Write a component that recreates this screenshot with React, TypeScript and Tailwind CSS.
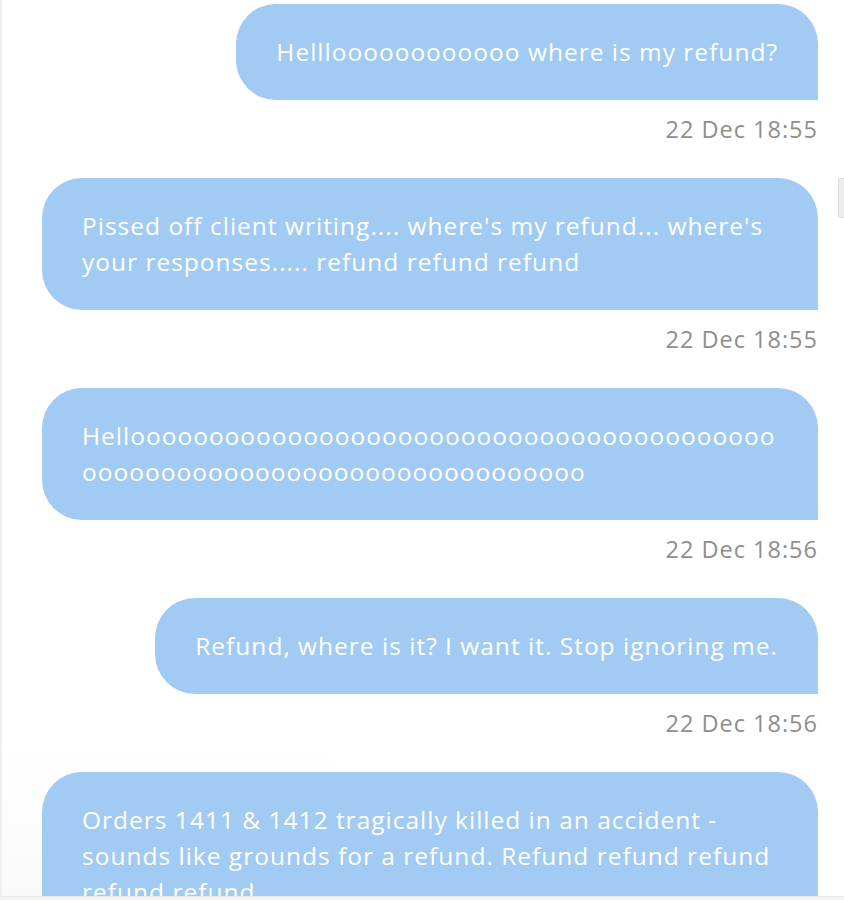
import React from 'react';

type Message = {
  id: number;
  text: string;
  time: string;
};

const messages: Message[] = [
  { id: 1, text: 'Hellloooooooooooo where is my refund?', time: '22 Dec 18:55' },
  {
    id: 2,
    text: "Pissed off client writing.... where's my refund... where's your responses..... refund refund refund",
    time: '22 Dec 18:55',
  },
  {
    id: 3,
    text: 'Hell' + 'o'.repeat(73),
    time: '22 Dec 18:56',
  },
  { id: 4, text: 'Refund, where is it? I want it. Stop ignoring me.', time: '22 Dec 18:56' },
  {
    id: 5,
    text: 'Orders 1411 & 1412 tragically killed in an accident - sounds like grounds for a refund. Refund refund refund refund refund',
    time: '22 Dec 18:57',
  },
];

const Bubble: React.FC<{ message: Message }> = ({ message }) => (
  <div className="mb-[34px] flex flex-col items-end">
    <div className="max-w-full rounded-[40px] rounded-br-none bg-[#a1cbf2] px-[40px] py-[30px] font-['Open_Sans',sans-serif] text-[24.5px] leading-[36px] tracking-[1px] text-white [overflow-wrap:anywhere]">
      {message.text}
    </div>
    <div className="mt-[14px] font-['Open_Sans',sans-serif] text-[23.5px] leading-[30px] tracking-[1px] text-[#8e8e8e]">
      {message.time}
    </div>
  </div>
);

const App: React.FC = () => {
  return (
    <div className="relative h-[900px] w-[844px] overflow-hidden border-l-2 border-[#f0f0f0] bg-white">
      {/* faint panel shadow bottom-left, behind the messages */}
      <div className="pointer-events-none absolute bottom-0 left-0 h-[155px] w-[330px] bg-gradient-to-b from-transparent to-[#f7f7f7] opacity-70" />
      <div className="absolute left-[-2px] top-[768px] h-[102px] w-[2px] bg-[#dcdce2]" />

      <div className="relative flex flex-col items-end pl-[40px] pr-[26px] pt-[4px]">
        {messages.map(m => (
          <Bubble key={m.id} message={m} />
        ))}
      </div>

      {/* scrollbar thumb */}
      <div className="absolute right-0 top-[178px] h-[40px] w-[6px] rounded-l-[3px] border border-r-0 border-[#dedede] bg-[#ececec]" />

      {/* bottom edge */}
      <div className="absolute bottom-0 left-0 h-[4px] w-full border-t border-[#e6e6e6] bg-[#f3f3f3]" />
    </div>
  );
};

export default App;
